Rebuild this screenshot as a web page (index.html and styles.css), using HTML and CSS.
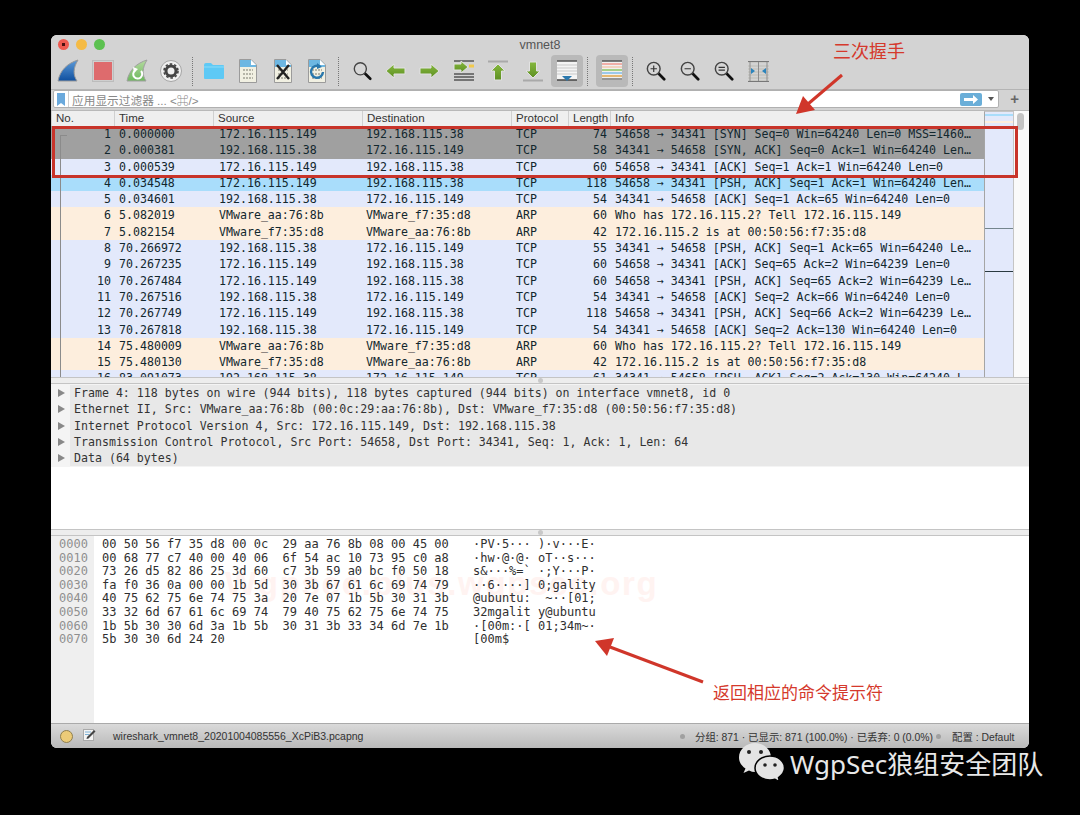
FILE: index.html
```html
<!DOCTYPE html>
<html lang="zh-CN">

<head>
    <meta charset="utf-8">
    <title>vmnet8</title>
    <link rel="stylesheet" href="styles.css">
</head>

<body>
<svg class="defs" width="0" height="0">
    <defs>
        <linearGradient id="finBlue" x1="0" y1="0" x2="0" y2="1">
            <stop offset="0" stop-color="#5d9bd8"/>
            <stop offset="1" stop-color="#0f4f9f"/>
        </linearGradient>
        <linearGradient id="finGreen" x1="0" y1="0" x2="0" y2="1">
            <stop offset="0" stop-color="#b5dba0"/>
            <stop offset="1" stop-color="#6cb85c"/>
        </linearGradient>
        <linearGradient id="arrowGreen" x1="0" y1="0" x2="0" y2="1">
            <stop offset="0" stop-color="#86b83e"/>
            <stop offset="1" stop-color="#5d8f22"/>
        </linearGradient>
        <symbol id="doc" viewBox="0 0 18 24">
            <path d="M.5.5H12L17.5 6V23.5H.5Z" fill="#f1f0e2" stroke="#9b9b9b"/>
            <path d="M1 1H12L17 6V8H1Z" fill="#6db7e2"/>
            <path d="M12 1V6H17Z" fill="#fff"/>
            <path d="M4 11H14M4 15H14M4 19H14" stroke="#b5b5a8" stroke-width="2" stroke-dasharray="2 1"/>
        </symbol>
        <symbol id="lens" viewBox="0 0 22 22">
            <path d="M13 13L20 20" stroke="#111" stroke-width="3" stroke-linecap="round"/>
            <circle cx="8.500" cy="8.500" r="7" fill="#d6d6d6" stroke="#444" stroke-width="1.600"/>
        </symbol>
    </defs>
</svg>

<div class="window">
    <div class="top">
        <div class="titlebar">
            <div class="lights">
                <i class="light red"></i>
                <i class="light yellow"></i>
                <i class="light green"></i>
            </div>
            <div class="wintitle">vmnet8</div>
        </div>
        <div class="toolbar">
            <div class="tool">
                <svg width="22" height="24" viewBox="0 0 22 24"><path d="M1 22C3 11 11 4 21 1C16 9 16 16 20 22Z" fill="url(#finBlue)" stroke="#9a9a9a"/></svg>
            </div>
            <div class="tool">
                <svg width="22" height="22" viewBox="0 0 22 22"><rect x=".5" y=".5" width="21" height="21" fill="#cfcfcf" stroke="#bcbcbc"/><rect x="2" y="2" width="18" height="18" fill="#de6b6d"/></svg>
            </div>
            <div class="tool">
                <svg width="22" height="24" viewBox="0 0 22 24"><path d="M1 22C3 11 11 4 21 1C16 9 16 16 20 22Z" fill="url(#finGreen)" stroke="#a0a0a0"/><path d="M15 12A4.500 4.500 0 1 1 9 11.500" fill="none" stroke="#fff" stroke-width="2"/><path d="M7 8L12 10L8 14Z" fill="#fff"/></svg>
            </div>
            <div class="tool">
                <svg width="22" height="22" viewBox="0 0 22 22"><circle cx="11" cy="11" r="10.500" fill="#efefef" stroke="#a5a5a5"/><circle cx="11" cy="11" r="5" fill="none" stroke="#444" stroke-width="3"/><circle cx="11" cy="11" r="7" fill="none" stroke="#444" stroke-width="1.600" stroke-dasharray="2.500 2"/></svg>
            </div>
            <i class="tsep"></i>
            <div class="tool">
                <svg width="22" height="18" viewBox="0 0 22 18"><path d="M1 3Q1 1 3 1H8L10 3H20Q21 3 21 4V16Q21 17 20 17H2Q1 17 1 16Z" fill="#5ec9f5"/><path d="M1 5H21" stroke="#8adcfa"/></svg>
            </div>
            <div class="tool">
                <svg width="18" height="24"><use href="#doc"/></svg>
            </div>
            <div class="tool">
                <svg width="18" height="24" viewBox="0 0 18 24"><use href="#doc" width="18" height="24"/><path d="M3 6L15 20M15 6L3 20" stroke="#222" stroke-width="2.400"/></svg>
            </div>
            <div class="tool">
                <svg width="18" height="24" viewBox="0 0 18 24"><use href="#doc" width="18" height="24"/><path d="M12 7.500A6 6 0 1 0 15 13" fill="none" stroke="#2a78ad" stroke-width="2.400"/><path d="M9 4L14 8L9 10Z" fill="#2a78ad"/></svg>
            </div>
            <i class="tsep wide"></i>
            <div class="tool">
                <svg class="findicon" width="19" height="22"><use href="#lens" width="19" height="22"/></svg>
            </div>
            <div class="tool">
                <svg width="21" height="16" viewBox="0 0 21 16"><path d="M1 8L9 1V5H20V11H9V15Z" fill="url(#arrowGreen)" stroke="#e2e2e2"/></svg>
            </div>
            <div class="tool">
                <svg width="21" height="16" viewBox="0 0 21 16"><path d="M20 8L12 1V5H1V11H12V15Z" fill="url(#arrowGreen)" stroke="#e2e2e2"/></svg>
            </div>
            <div class="tool">
                <svg width="22" height="22" viewBox="0 0 22 22"><path d="M1 1H21M1 14H21M1 17H21M1 20H21" stroke="#555" stroke-width="1.300"/><path d="M16 6H21" stroke="#f2c94c" stroke-width="3"/><path d="M15 7L8 1V4H1V10H8V13Z" fill="url(#arrowGreen)" stroke="#e2e2e2"/></svg>
            </div>
            <div class="tool">
                <svg width="22" height="22" viewBox="0 0 22 22"><path d="M1 1.500H21" stroke="#a9a9a9" stroke-width="2"/><path d="M11 4L18 11H14.500V20H7.500V11H4Z" fill="url(#arrowGreen)" stroke="#e2e2e2"/></svg>
            </div>
            <div class="tool">
                <svg width="22" height="22" viewBox="0 0 22 22"><path d="M1 20.500H21" stroke="#a9a9a9" stroke-width="2"/><path d="M11 18L18 11H14.500V2H7.500V11H4Z" fill="url(#arrowGreen)" stroke="#e2e2e2"/></svg>
            </div>
            <div class="tool active">
                <svg width="22" height="22" viewBox="0 0 22 22"><rect x="1" y="1" width="20" height="19" fill="#f4f4f4"/><path d="M1 1H21" stroke="#555" stroke-width="1.500"/><path d="M1 5H21M1 8H21M1 11H21M1 14H21" stroke="#c9c9c9"/><path d="M1 20H21" stroke="#444" stroke-width="1.500"/><path d="M6 16H16L11 21Z" fill="#2a78ad"/></svg>
            </div>
            <i class="tsep"></i>
            <div class="tool active colorize">
                <svg width="22" height="22" viewBox="0 0 22 22"><rect x="1" y="1" width="20" height="19" fill="#f0f0f0"/><path d="M1 1H21" stroke="#555" stroke-width="1.300"/><path d="M1 4H21" stroke="#f09a90" stroke-width="1.500"/><path d="M1 7H21" stroke="#f4c9b0" stroke-width="1.500"/><path d="M1 10H21" stroke="#8cc464" stroke-width="1.500"/><path d="M1 13H21" stroke="#7fbcea" stroke-width="1.500"/><path d="M1 16H21" stroke="#e2a64a" stroke-width="1.500"/><path d="M1 19H21" stroke="#777" stroke-width="1.500"/></svg>
            </div>
            <i class="tsep"></i>
            <div class="tool zoomfirst">
                <svg width="20" height="20" viewBox="0 0 22 22"><use href="#lens" width="22" height="22"/><path d="M5 8.500H12M8.500 5V12" stroke="#333" stroke-width="1.300"/></svg>
            </div>
            <div class="tool">
                <svg width="20" height="20" viewBox="0 0 22 22"><use href="#lens" width="22" height="22"/><path d="M5 8.500H12" stroke="#333" stroke-width="1.300"/></svg>
            </div>
            <div class="tool">
                <svg width="20" height="20" viewBox="0 0 22 22"><use href="#lens" width="22" height="22"/><path d="M5 7H12M5 10H12" stroke="#333" stroke-width="1.300"/></svg>
            </div>
            <div class="tool">
                <svg width="21" height="21" viewBox="0 0 21 21"><path d="M0 1H21M0 5H21M0 8H21M0 11H21M0 14H21M0 17H21M0 20H21" stroke="#bdbdb5"/><path d="M0 .5H21M0 20.500H21" stroke="#777"/><path d="M2 1V20M10.500 1V20M19 1V20" stroke="#8d8d8d"/><path d="M3 7L7 10L3 13ZM18 7L14 10L18 13Z" fill="#2a84bd"/></svg>
            </div>
        </div>
    </div>

    <div class="filterbar">
        <div class="filterbox">
            <div class="bookmark">
                <svg width="8" height="13" viewBox="0 0 8 13"><path d="M0 0H8V13L4 10L0 13Z" fill="#6aa9dc"/></svg>
            </div>
            <div class="filtertext">应用显示过滤器 ... &lt;⌘/&gt;</div>
            <div class="gobtn">
                <svg width="14" height="9" viewBox="0 0 14 9"><path d="M0 3H9V0L14 4.500L9 9V6H0Z" fill="#fff"/></svg>
            </div>
            <div class="dropbtn"></div>
        </div>
        <div class="plus">+</div>
    </div>

    <div class="listpane">
        <div class="listmain">
            <div class="listhead">
                <span>No.</span><span>Time</span><span>Source</span><span>Destination</span><span>Protocol</span><span>Length</span><span>Info</span>
            </div>
            <div class="rows">
                <i class="relline"></i>
                <div class="row syn"><span class="num">1</span><span>0.000000</span><span>172.16.115.149</span><span>192.168.115.38</span><span>TCP</span><span class="num">74</span><span>54658 → 34341 [SYN] Seq=0 Win=64240 Len=0 MSS=1460…</span></div>
                <div class="row syn"><span class="num">2</span><span>0.000381</span><span>192.168.115.38</span><span>172.16.115.149</span><span>TCP</span><span class="num">58</span><span>34341 → 54658 [SYN, ACK] Seq=0 Ack=1 Win=64240 Len…</span></div>
                <div class="row tcp"><span class="num">3</span><span>0.000539</span><span>172.16.115.149</span><span>192.168.115.38</span><span>TCP</span><span class="num">60</span><span>54658 → 34341 [ACK] Seq=1 Ack=1 Win=64240 Len=0</span></div>
                <div class="row sel"><span class="num">4</span><span>0.034548</span><span>172.16.115.149</span><span>192.168.115.38</span><span>TCP</span><span class="num">118</span><span>54658 → 34341 [PSH, ACK] Seq=1 Ack=1 Win=64240 Len…</span></div>
                <div class="row tcp"><span class="num">5</span><span>0.034601</span><span>192.168.115.38</span><span>172.16.115.149</span><span>TCP</span><span class="num">54</span><span>34341 → 54658 [ACK] Seq=1 Ack=65 Win=64240 Len=0</span></div>
                <div class="row arp"><span class="num">6</span><span>5.082019</span><span>VMware_aa:76:8b</span><span>VMware_f7:35:d8</span><span>ARP</span><span class="num">60</span><span>Who has 172.16.115.2? Tell 172.16.115.149</span></div>
                <div class="row arp"><span class="num">7</span><span>5.082154</span><span>VMware_f7:35:d8</span><span>VMware_aa:76:8b</span><span>ARP</span><span class="num">42</span><span>172.16.115.2 is at 00:50:56:f7:35:d8</span></div>
                <div class="row tcp"><span class="num">8</span><span>70.266972</span><span>192.168.115.38</span><span>172.16.115.149</span><span>TCP</span><span class="num">55</span><span>34341 → 54658 [PSH, ACK] Seq=1 Ack=65 Win=64240 Le…</span></div>
                <div class="row tcp"><span class="num">9</span><span>70.267235</span><span>172.16.115.149</span><span>192.168.115.38</span><span>TCP</span><span class="num">60</span><span>54658 → 34341 [ACK] Seq=65 Ack=2 Win=64239 Len=0</span></div>
                <div class="row tcp"><span class="num">10</span><span>70.267484</span><span>172.16.115.149</span><span>192.168.115.38</span><span>TCP</span><span class="num">60</span><span>54658 → 34341 [PSH, ACK] Seq=65 Ack=2 Win=64239 Le…</span></div>
                <div class="row tcp"><span class="num">11</span><span>70.267516</span><span>192.168.115.38</span><span>172.16.115.149</span><span>TCP</span><span class="num">54</span><span>34341 → 54658 [ACK] Seq=2 Ack=66 Win=64240 Len=0</span></div>
                <div class="row tcp"><span class="num">12</span><span>70.267749</span><span>172.16.115.149</span><span>192.168.115.38</span><span>TCP</span><span class="num">118</span><span>54658 → 34341 [PSH, ACK] Seq=66 Ack=2 Win=64239 Le…</span></div>
                <div class="row tcp"><span class="num">13</span><span>70.267818</span><span>192.168.115.38</span><span>172.16.115.149</span><span>TCP</span><span class="num">54</span><span>34341 → 54658 [ACK] Seq=2 Ack=130 Win=64240 Len=0</span></div>
                <div class="row arp"><span class="num">14</span><span>75.480009</span><span>VMware_aa:76:8b</span><span>VMware_f7:35:d8</span><span>ARP</span><span class="num">60</span><span>Who has 172.16.115.2? Tell 172.16.115.149</span></div>
                <div class="row arp"><span class="num">15</span><span>75.480130</span><span>VMware_f7:35:d8</span><span>VMware_aa:76:8b</span><span>ARP</span><span class="num">42</span><span>172.16.115.2 is at 00:50:56:f7:35:d8</span></div>
                <div class="row tcp"><span class="num">16</span><span>83.091073</span><span>192.168.115.38</span><span>172.16.115.149</span><span>TCP</span><span class="num">61</span><span>34341 → 54658 [PSH, ACK] Seq=2 Ack=130 Win=64240 L…</span></div>
            </div>
        </div>
        <div class="minimap">
            <i class="mm-top"></i>
            <i class="mm-line1"></i>
            <i class="mm-line2"></i>
        </div>
        <div class="scrollbar"><i class="thumb"></i></div>
    </div>

    <div class="splitter"><i class="grip"></i></div>

    <div class="detailpane">
        <div class="tree">
            <div class="node">Frame 4: 118 bytes on wire (944 bits), 118 bytes captured (944 bits) on interface vmnet8, id 0</div>
            <div class="node">Ethernet II, Src: VMware_aa:76:8b (00:0c:29:aa:76:8b), Dst: VMware_f7:35:d8 (00:50:56:f7:35:d8)</div>
            <div class="node">Internet Protocol Version 4, Src: 172.16.115.149, Dst: 192.168.115.38</div>
            <div class="node">Transmission Control Protocol, Src Port: 54658, Dst Port: 34341, Seq: 1, Ack: 1, Len: 64</div>
            <div class="node">Data (64 bytes)</div>
        </div>
    </div>

    <div class="splitter"><i class="grip"></i></div>

    <div class="hexpane">
<pre class="offsets">0000
0010
0020
0030
0040
0050
0060
0070</pre>
<pre class="hex">00 50 56 f7 35 d8 00 0c  29 aa 76 8b 08 00 45 00
00 68 77 c7 40 00 40 06  6f 54 ac 10 73 95 c0 a8
73 26 d5 82 86 25 3d 60  c7 3b 59 a0 bc f0 50 18
fa f0 36 0a 00 00 1b 5d  30 3b 67 61 6c 69 74 79
40 75 62 75 6e 74 75 3a  20 7e 07 1b 5b 30 31 3b
33 32 6d 67 61 6c 69 74  79 40 75 62 75 6e 74 75
1b 5b 30 30 6d 3a 1b 5b  30 31 3b 33 34 6d 7e 1b
5b 30 30 6d 24 20</pre>
<pre class="ascii">·PV·5··· )·v···E·
·hw·@·@· oT··s···
s&amp;···%=` ·;Y···P·
··6····] 0;gality
@ubuntu:  ~··[01;
32mgalit y@ubuntu
·[00m:·[ 01;34m~·
[00m$</pre>
        <div class="watermark">Wgpsec.plus.wgpsec.org</div>
    </div>

    <div class="statusbar">
        <i class="expert"></i>
        <svg class="noteicon" width="13" height="13" viewBox="0 0 13 13"><rect x=".5" y="1.500" width="10" height="11" fill="#f4f4f4" stroke="#aaa"/><path d="M2 4H8M2 6.500H6" stroke="#7fb2d6"/><path d="M4 9L11 2L12.500 3.500L5.500 10.500L3.500 11Z" fill="#444"/></svg>
        <span class="capfile">wireshark_vmnet8_20201004085556_XcPiB3.pcapng</span>
        <i class="sdot first"></i>
        <span class="stats">分组: 871 · 已显示: 871 (100.0%) · 已丢弃: 0 (0.0%)</span>
        <i class="sdot"></i>
        <span class="profile">配置 : Default</span>
    </div>

    <div class="redbox"></div>
</div>

<div class="note note1">三次握手</div>
<div class="note note2">返回相应的命令提示符</div>
<svg class="arrows" width="1080" height="815" viewBox="0 0 1080 815">
    <path d="M842 75L808 104" stroke="#d0362a" stroke-width="3"/>
    <path d="M796 114L803 96L815 110Z" fill="#d0362a"/>
    <path d="M703 682L610 647" stroke="#d0362a" stroke-width="3"/>
    <path d="M595 641L614 638L607 656Z" fill="#d0362a"/>
</svg>

<div class="brand">
    <svg width="48" height="42" viewBox="0 0 48 42">
        <path d="M17 1C8 1 1 7.500 1 15.500C1 20 3.500 24 7.500 26.500L5.500 31L11 28.500C13 29.500 15 30 17 30C27 30 33 23 33 15.500C33 7.500 26 1 17 1Z" fill="#e4e4e4"/>
        <circle cx="11" cy="10" r="2" fill="#222"/>
        <circle cx="23" cy="10" r="2" fill="#222"/>
        <path d="M32 14C24 14 17 19 17 26C17 33 24 38 32 38C34 38 35.500 37.700 37 37.200L41.500 40L40.500 35.500C44 33 46.500 30 46.500 26C46.500 19 40 14 32 14Z" fill="#e4e4e4" stroke="#000" stroke-width="1.500"/>
        <circle cx="27" cy="23" r="1.800" fill="#222"/>
        <circle cx="37" cy="23" r="1.800" fill="#222"/>
    </svg>
    <span class="brandname">WgpSec狼组安全团队</span>
</div>
</body>

</html>
```

FILE: styles.css
```css
* {
    margin: 0;
    padding: 0;
    box-sizing: border-box;
}

html, body {
    width: 1080px;
    height: 815px;
    overflow: hidden;
    background-color: #000;
}

body {
    position: relative;
    padding: 35px 51px 0;
    font-family: "Liberation Sans", "Noto Sans CJK SC", sans-serif;
    color: #222;
}

i {
    display: block;
}

.defs {
    position: absolute;
}

.window {
    position: relative;
    width: 978px;
    height: 713px;
    display: flex;
    flex-direction: column;
    border-radius: 6px;
    overflow: hidden;
    background-color: #fff;
}

/* title and toolbar */
.top {
    height: 55px;
    background-color: #d3d3d3;
    border-bottom: 1px solid #b4b4b4;
}

.titlebar {
    height: 18px;
    display: flex;
    align-items: center;
    position: relative;
    padding-left: 7px;
}

.lights {
    display: flex;
    gap: 7px;
    margin-top: 1px;
}

.light {
    width: 11px;
    height: 11px;
    border-radius: 50%;
}

.light.red {
    background: radial-gradient(circle, #4a1010 0 1.500px, #ee5a50 2px);
}

.light.yellow {
    background-color: #f5bb45;
}

.light.green {
    background-color: #5cc150;
}

.wintitle {
    flex: 1;
    text-align: center;
    font-size: 12.500px;
    color: #555;
    margin-right: 54px;
    margin-top: 2px;
}

.toolbar {
    height: 36px;
    display: flex;
    align-items: center;
}

.tool {
    width: 34.400px;
    height: 32px;
    display: flex;
    align-items: center;
    justify-content: center;
    border-radius: 4px;
}

.tool.active {
    width: 32px;
    margin-left: 1.500px;
    background-color: #b9b9b9;
}

.tool.colorize {
    margin-left: 5px;
}

.tool.zoomfirst {
    margin-left: 2px;
}

.findicon {
    margin-left: 4px;
}

.tsep {
    width: 1px;
    height: 29px;
    margin: 0 3.500px;
    border-left: 1px dotted #777;
}

.tsep.wide {
    margin-right: 5px;
}

/* filter */
.filterbar {
    height: 21px;
    display: flex;
    align-items: center;
    background-color: #d3d3d3;
    padding: 0 10px 2px 2px;
    border-bottom: 1px solid #b9b9b9;
}

.filterbox {
    width: 946px;
    height: 18px;
    display: flex;
    align-items: center;
    background-color: #fff;
    border: 1px solid #b0b0b0;
    border-radius: 2px;
}

.bookmark {
    width: 15px;
    height: 16px;
    display: flex;
    align-items: center;
    justify-content: center;
    border-right: 1px solid #d0d0d0;
}

.filtertext {
    flex: 1;
    padding-left: 3px;
    font-size: 11.700px;
    color: #888;
}

.gobtn {
    width: 22px;
    height: 13px;
    display: flex;
    align-items: center;
    justify-content: center;
    background-color: #6aaed8;
    border-radius: 2px;
}

.dropbtn {
    width: 16px;
    height: 16px;
    position: relative;
}

.dropbtn::after {
    content: "";
    position: absolute;
    left: 6px;
    top: 6px;
    border-left: 3px solid transparent;
    border-right: 3px solid transparent;
    border-top: 4px solid #555;
}

.plus {
    flex: 1;
    text-align: right;
    font-size: 15px;
    font-weight: bold;
    color: #666;
    line-height: 16px;
}

/* packet list */
.listpane {
    height: 266px;
    display: flex;
}

.listmain {
    width: 933px;
    display: flex;
    flex-direction: column;
    overflow: hidden;
}

.listhead {
    height: 15px;
    display: grid;
    grid-template-columns: 63px 99px 149px 149px 57px 42px 1fr;
    background-color: #efefef;
    font-size: 11.500px;
    line-height: 14px;
    color: #333;
}

.listhead span {
    padding-left: 4px;
    border-left: 1px solid #d0d0d0;
    white-space: nowrap;
    overflow: hidden;
}

.rows {
    position: relative;
    flex: 1;
    overflow: hidden;
}

.row {
    height: 16.300px;
    display: grid;
    grid-template-columns: 60px 100px 147px 150px 56px 43px 1fr;
    font-family: "DejaVu Sans Mono", "Liberation Mono", monospace;
    font-size: 11.600px;
    line-height: 16.300px;
    color: #12272e;
    white-space: nowrap;
}

.row span {
    padding-left: 8px;
    overflow: hidden;
}

.row .num {
    padding-left: 0;
    text-align: right;
}

.row.syn {
    background-color: #a0a0a0;
}

.row.tcp {
    background-color: #e3e9fb;
}

.row.sel {
    background-color: #a9ddfb;
}

.row.arp {
    background-color: #fdeedd;
}

.relline {
    position: absolute;
    left: 9px;
    top: 9px;
    bottom: 0;
    width: 7px;
    border-left: 1px solid #8b8b8b;
    border-top: 1px solid #8b8b8b;
}

.minimap {
    position: relative;
    width: 30px;
    background-color: #e3e9fb;
    border-left: 1px solid #a5a5a5;
    border-right: 1px solid #c5c5c5;
    border-top: 1px solid #c5c5c5;
}

.mm-top {
    height: 11px;
    background: linear-gradient(#e3e9fb 0 2px, #a9ddfb 2px 4px, #e3e9fb 4px 9px, #fdeedd 9px);
}

.mm-line1 {
    position: absolute;
    left: 0;
    right: 0;
    top: 116px;
    height: 1px;
    background-color: #74858c;
}

.mm-line2 {
    position: absolute;
    left: 0;
    right: 0;
    top: 159px;
    height: 1px;
    background-color: #2a3a40;
}

.scrollbar {
    flex: 1;
    background-color: #fafafa;
    padding: 2px 0 0 3px;
}

.thumb {
    width: 7px;
    height: 17px;
    background-color: #c4c4c4;
    border-radius: 4px;
}

.splitter {
    height: 7px;
    display: flex;
    justify-content: center;
    align-items: center;
    background-color: #ededed;
    border-top: 1px solid #c4c4c4;
    border-bottom: 1px solid #c4c4c4;
}

.grip {
    width: 5px;
    height: 5px;
    border-radius: 50%;
    background-color: #c8c8c8;
}

/* packet details */
.detailpane {
    height: 145px;
    background-color: #fff;
}

.tree {
    background-color: #f4f4f4;
    padding: 1px 0;
}

.node {
    position: relative;
    margin-left: 19px;
    padding-left: 4px;
    height: 16.300px;
    background-color: #e8e8e8;
    font-family: "DejaVu Sans Mono", "Liberation Mono", monospace;
    font-size: 11.600px;
    line-height: 16.300px;
    color: #333;
    white-space: nowrap;
}

.node::before {
    content: "";
    position: absolute;
    left: -12px;
    top: 4px;
    border-top: 4px solid transparent;
    border-bottom: 4px solid transparent;
    border-left: 7px solid #888;
}

/* hex dump */
.hexpane {
    position: relative;
    height: 188px;
    display: flex;
    background: linear-gradient(90deg, #efefef 43px, #fff 43px);
    border-bottom: 1px solid #aaa;
}

.hexpane pre {
    position: relative;
    z-index: 1;
    font-family: "DejaVu Sans Mono", "Liberation Mono", monospace;
    font-size: 12px;
    line-height: 13.600px;
    padding-top: 2px;
}

.offsets {
    width: 51px;
    padding-left: 8px;
    color: #8f8f8f;
}

.hex {
    width: 371px;
    color: #2f2f2f;
}

.ascii {
    color: #2f2f2f;
}

.watermark {
    position: absolute;
    left: 174px;
    top: 29px;
    font-size: 33px;
    font-weight: bold;
    letter-spacing: 1.700px;
    color: #fff3f1;
    white-space: nowrap;
}

/* status bar */
.statusbar {
    flex: 1;
    display: flex;
    align-items: center;
    padding-left: 9px;
    background: linear-gradient(#dadada, #b9b9b9);
    font-size: 10.400px;
    color: #333;
}

.expert {
    width: 13px;
    height: 13px;
    border-radius: 50%;
    background-color: #eccb78;
    border: 1px solid #8f7f4f;
}

.noteicon {
    margin-left: 10px;
    margin-top: -4px;
}

.capfile {
    margin-left: 17px;
    width: 567px;
    font-size: 10.500px;
}

.sdot {
    width: 5px;
    height: 5px;
    border-radius: 50%;
    background-color: #a0a0a0;
}

.stats {
    margin-left: 10px;
    width: 241px;
    white-space: nowrap;
}

.profile {
    margin-left: 11px;
    white-space: nowrap;
}

/* annotations on top of the screenshot */
.redbox {
    position: absolute;
    left: 1px;
    top: 91px;
    width: 966px;
    height: 52px;
    border: 3px solid #c8342a;
}

.note {
    position: absolute;
    color: #d5392c;
    font-size: 17px;
    line-height: 20px;
    white-space: nowrap;
}

.note1 {
    left: 833px;
    top: 42px;
    font-size: 18px;
}

.note2 {
    left: 713px;
    top: 684px;
}

.arrows {
    position: absolute;
    left: 0;
    top: 0;
}

.brand {
    position: absolute;
    left: 738px;
    top: 742px;
    display: flex;
    align-items: flex-start;
    gap: 4px;
    color: #e8e8e8;
}

.brandname {
    font-family: "Noto Sans", "Noto Sans CJK SC", sans-serif;
    font-size: 26px;
    line-height: 44px;
    white-space: nowrap;
}
```
